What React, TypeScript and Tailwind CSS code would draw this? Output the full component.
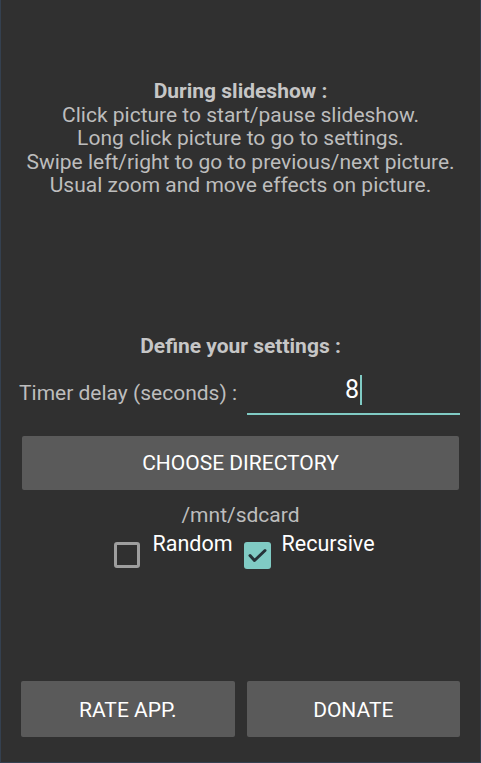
export default function App() {
  return (
    <div className="flex h-[763px] w-[481px] flex-col border-x border-b border-[#34404f] bg-[#303030] font-['Roboto',sans-serif] text-[21px] leading-[23.5px] text-[#bdbdbd]">
      <div className="mt-[80px] flex flex-col items-center text-center">
        <p className="font-bold text-[#c6c6c6]">During slideshow :</p>
        <p>Click picture to start/pause slideshow.</p>
        <p>Long click picture to go to settings.</p>
        <p>Swipe left/right to go to previous/next picture.</p>
        <p>Usual zoom and move effects on picture.</p>
      </div>

      <p className="mt-[137px] text-center font-bold text-[#c6c6c6]">Define your settings :</p>

      <div className="mt-[11px] flex items-end px-[20px]">
        <span className="mb-[10px] -ml-[2px]">Timer delay (seconds) :</span>
        <div className="ml-auto flex h-[46px] w-[213px] items-center justify-center border-b-2 border-[#80cbc4] pb-[2px]">
          <span className="text-[25px] text-white">8</span>
          <span className="ml-[1px] h-[30px] w-[2px] bg-[#80cbc4]" />
        </div>
      </div>

      <button className="mx-[21px] mt-[21px] h-[54px] rounded-[2px] bg-[#5a5a5a] pt-[2px] text-[21px] text-white">
        CHOOSE DIRECTORY
      </button>

      <p className="mt-[14px] text-center">/mnt/sdcard</p>

      <div className="mt-[4px] flex items-start justify-center pl-[8px]">
        <span className="mt-[10px] h-[26px] w-[26px] rounded-[3px] border-[3px] border-[#9e9e9e]" />
        <span className="ml-[12px] text-[21.5px] text-white">Random</span>
        <span className="ml-[11px] mt-[10px] h-[27px] w-[27px] rounded-[3px] bg-[#80cbc4]">
          <svg viewBox="0 0 27 27" className="h-[27px] w-[27px]" fill="none">
            <path d="M6 13.5l4.5 5L21 8.5" stroke="#263238" strokeWidth="3" strokeLinecap="round" strokeLinejoin="round" />
          </svg>
        </span>
        <span className="ml-[11px] text-[21.5px] text-white">Recursive</span>
      </div>

      <div className="mt-auto mb-[25px] flex gap-[12px] px-[20px]">
        <button className="h-[56px] flex-1 rounded-[2px] bg-[#5a5a5a] pt-[4px] text-[21px] text-white">RATE APP.</button>
        <button className="h-[56px] flex-1 rounded-[2px] bg-[#5a5a5a] pt-[4px] text-[21px] text-white">DONATE</button>
      </div>
    </div>
  );
}
